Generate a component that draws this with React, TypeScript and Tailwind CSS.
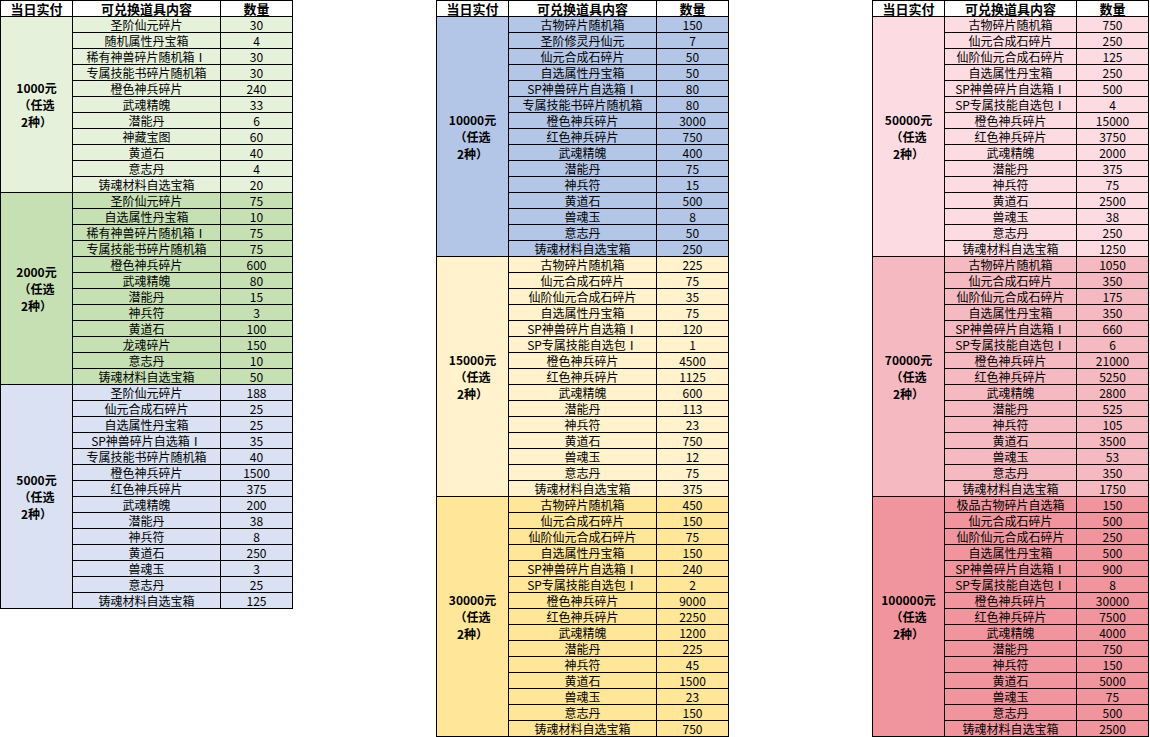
type Item = [string, string];
type Group = { amount: string; bg: string; items: Item[] };
type Sheet = { nameW: string; groups: Group[] };

const sheets: Sheet[] = [
  {
    nameW: "w-[148px]",
    groups: [
      {
        amount: "1000元",
        bg: "bg-[#e6f1dc]",
        items: [
          ["圣阶仙元碎片", "30"],
          ["随机属性丹宝箱", "4"],
          ["稀有神兽碎片随机箱Ⅰ", "30"],
          ["专属技能书碎片随机箱", "30"],
          ["橙色神兵碎片", "240"],
          ["武魂精魄", "33"],
          ["潜能丹", "6"],
          ["神藏宝图", "60"],
          ["黄道石", "40"],
          ["意志丹", "4"],
          ["铸魂材料自选宝箱", "20"],
        ],
      },
      {
        amount: "2000元",
        bg: "bg-[#c6e0b4]",
        items: [
          ["圣阶仙元碎片", "75"],
          ["自选属性丹宝箱", "10"],
          ["稀有神兽碎片随机箱Ⅰ", "75"],
          ["专属技能书碎片随机箱", "75"],
          ["橙色神兵碎片", "600"],
          ["武魂精魄", "80"],
          ["潜能丹", "15"],
          ["神兵符", "3"],
          ["黄道石", "100"],
          ["龙魂碎片", "150"],
          ["意志丹", "10"],
          ["铸魂材料自选宝箱", "50"],
        ],
      },
      {
        amount: "5000元",
        bg: "bg-[#d9e1f2]",
        items: [
          ["圣阶仙元碎片", "188"],
          ["仙元合成石碎片", "25"],
          ["自选属性丹宝箱", "25"],
          ["SP神兽碎片自选箱Ⅰ", "35"],
          ["专属技能书碎片随机箱", "40"],
          ["橙色神兵碎片", "1500"],
          ["红色神兵碎片", "375"],
          ["武魂精魄", "200"],
          ["潜能丹", "38"],
          ["神兵符", "8"],
          ["黄道石", "250"],
          ["兽魂玉", "3"],
          ["意志丹", "25"],
          ["铸魂材料自选宝箱", "125"],
        ],
      },
    ],
  },
  {
    nameW: "w-[148px]",
    groups: [
      {
        amount: "10000元",
        bg: "bg-[#b4c6e7]",
        items: [
          ["古物碎片随机箱", "150"],
          ["圣阶修灵丹仙元", "7"],
          ["仙元合成石碎片", "50"],
          ["自选属性丹宝箱", "50"],
          ["SP神兽碎片自选箱Ⅰ", "80"],
          ["专属技能书碎片随机箱", "80"],
          ["橙色神兵碎片", "3000"],
          ["红色神兵碎片", "750"],
          ["武魂精魄", "400"],
          ["潜能丹", "75"],
          ["神兵符", "15"],
          ["黄道石", "500"],
          ["兽魂玉", "8"],
          ["意志丹", "50"],
          ["铸魂材料自选宝箱", "250"],
        ],
      },
      {
        amount: "15000元",
        bg: "bg-[#fff2cc]",
        items: [
          ["古物碎片随机箱", "225"],
          ["仙元合成石碎片", "75"],
          ["仙阶仙元合成石碎片", "35"],
          ["自选属性丹宝箱", "75"],
          ["SP神兽碎片自选箱Ⅰ", "120"],
          ["SP专属技能自选包Ⅰ", "1"],
          ["橙色神兵碎片", "4500"],
          ["红色神兵碎片", "1125"],
          ["武魂精魄", "600"],
          ["潜能丹", "113"],
          ["神兵符", "23"],
          ["黄道石", "750"],
          ["兽魂玉", "12"],
          ["意志丹", "75"],
          ["铸魂材料自选宝箱", "375"],
        ],
      },
      {
        amount: "30000元",
        bg: "bg-[#ffe699]",
        items: [
          ["古物碎片随机箱", "450"],
          ["仙元合成石碎片", "150"],
          ["仙阶仙元合成石碎片", "75"],
          ["自选属性丹宝箱", "150"],
          ["SP神兽碎片自选箱Ⅰ", "240"],
          ["SP专属技能自选包Ⅰ", "2"],
          ["橙色神兵碎片", "9000"],
          ["红色神兵碎片", "2250"],
          ["武魂精魄", "1200"],
          ["潜能丹", "225"],
          ["神兵符", "45"],
          ["黄道石", "1500"],
          ["兽魂玉", "23"],
          ["意志丹", "150"],
          ["铸魂材料自选宝箱", "750"],
        ],
      },
    ],
  },
  {
    nameW: "w-[132px]",
    groups: [
      {
        amount: "50000元",
        bg: "bg-[#fcdce2]",
        items: [
          ["古物碎片随机箱", "750"],
          ["仙元合成石碎片", "250"],
          ["仙阶仙元合成石碎片", "125"],
          ["自选属性丹宝箱", "250"],
          ["SP神兽碎片自选箱Ⅰ", "500"],
          ["SP专属技能自选包Ⅰ", "4"],
          ["橙色神兵碎片", "15000"],
          ["红色神兵碎片", "3750"],
          ["武魂精魄", "2000"],
          ["潜能丹", "375"],
          ["神兵符", "75"],
          ["黄道石", "2500"],
          ["兽魂玉", "38"],
          ["意志丹", "250"],
          ["铸魂材料自选宝箱", "1250"],
        ],
      },
      {
        amount: "70000元",
        bg: "bg-[#f5b9c1]",
        items: [
          ["古物碎片随机箱", "1050"],
          ["仙元合成石碎片", "350"],
          ["仙阶仙元合成石碎片", "175"],
          ["自选属性丹宝箱", "350"],
          ["SP神兽碎片自选箱Ⅰ", "660"],
          ["SP专属技能自选包Ⅰ", "6"],
          ["橙色神兵碎片", "21000"],
          ["红色神兵碎片", "5250"],
          ["武魂精魄", "2800"],
          ["潜能丹", "525"],
          ["神兵符", "105"],
          ["黄道石", "3500"],
          ["兽魂玉", "53"],
          ["意志丹", "350"],
          ["铸魂材料自选宝箱", "1750"],
        ],
      },
      {
        amount: "100000元",
        bg: "bg-[#f0949d]",
        items: [
          ["极品古物碎片自选箱", "150"],
          ["仙元合成石碎片", "500"],
          ["仙阶仙元合成石碎片", "250"],
          ["自选属性丹宝箱", "500"],
          ["SP神兽碎片自选箱Ⅰ", "900"],
          ["SP专属技能自选包Ⅰ", "8"],
          ["橙色神兵碎片", "30000"],
          ["红色神兵碎片", "7500"],
          ["武魂精魄", "4000"],
          ["潜能丹", "750"],
          ["神兵符", "150"],
          ["黄道石", "5000"],
          ["兽魂玉", "75"],
          ["意志丹", "500"],
          ["铸魂材料自选宝箱", "2500"],
        ],
      },
    ],
  },
];

const cell = "border-r border-b border-black flex items-center justify-center";

function SheetTable({ sheet }: { sheet: Sheet }) {
  return (
    <div className="border-l border-t border-black shrink-0">
      <div className="flex h-4 bg-white text-[13px] font-bold leading-[15px]">
        <div className={`w-[72px] ${cell}`}>当日实付</div>
        <div className={`${sheet.nameW} ${cell}`}>可兑换道具内容</div>
        <div className={`w-[72px] ${cell}`}>数量</div>
      </div>
      {sheet.groups.map((g) => (
        <div key={g.amount} className={`flex ${g.bg}`}>
          <div className={`w-[72px] ${cell} flex-col text-[12px] font-bold leading-[17px]`}>
            <span>{g.amount}</span>
            <span>（任选</span>
            <span>2种）</span>
          </div>
          <div className="flex flex-col">
            {g.items.map(([name, qty], i) => (
              <div key={i} className="flex h-4 text-[12px] leading-[15px]">
                <div className={`${sheet.nameW} ${cell} whitespace-nowrap`}>{name}</div>
                <div className={`w-[72px] ${cell}`}>{qty}</div>
              </div>
            ))}
          </div>
        </div>
      ))}
    </div>
  );
}

export default function App() {
  return (
    <div
      className="w-[1150px] h-[737px] bg-white text-black flex items-start gap-[143px] overflow-hidden"
      style={{ fontFamily: '"Noto Sans CJK SC", "Noto Sans", sans-serif' }}
    >
      {sheets.map((s, i) => (
        <SheetTable key={i} sheet={s} />
      ))}
    </div>
  );
}
